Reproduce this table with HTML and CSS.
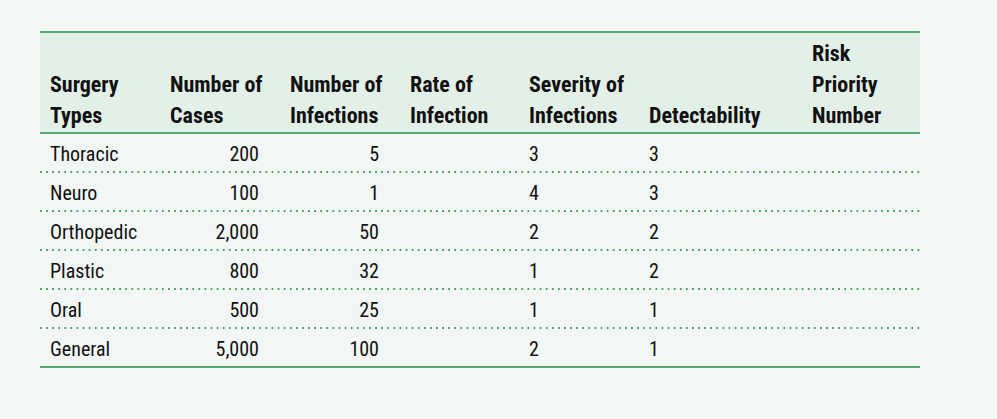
FILE: index.html
```html
<!DOCTYPE html>
<html lang="en">
<head>
<meta charset="utf-8">
<title>Surgical infection risk</title>
<link rel="stylesheet" href="styles.css">
</head>
<body>
<main class="page">
  <div class="table" role="table">
    <div class="row head" role="row">
      <div class="cell" role="columnheader">Surgery<br>Types</div>
      <div class="cell" role="columnheader">Number of<br>Cases</div>
      <div class="cell" role="columnheader">Number of<br>Infections</div>
      <div class="cell" role="columnheader">Rate of<br>Infection</div>
      <div class="cell" role="columnheader">Severity of<br>Infections</div>
      <div class="cell" role="columnheader">Detectability</div>
      <div class="cell" role="columnheader">Risk<br>Priority<br>Number</div>
    </div>
    <div class="row body" role="row">
      <div class="cell">Thoracic</div><div class="cell num">200</div><div class="cell num">5</div><div class="cell"></div><div class="cell">3</div><div class="cell">3</div><div class="cell"></div>
    </div>
    <div class="row body" role="row">
      <div class="cell">Neuro</div><div class="cell num">100</div><div class="cell num">1</div><div class="cell"></div><div class="cell">4</div><div class="cell">3</div><div class="cell"></div>
    </div>
    <div class="row body" role="row">
      <div class="cell">Orthopedic</div><div class="cell num">2,000</div><div class="cell num">50</div><div class="cell"></div><div class="cell">2</div><div class="cell">2</div><div class="cell"></div>
    </div>
    <div class="row body" role="row">
      <div class="cell">Plastic</div><div class="cell num">800</div><div class="cell num">32</div><div class="cell"></div><div class="cell">1</div><div class="cell">2</div><div class="cell"></div>
    </div>
    <div class="row body" role="row">
      <div class="cell">Oral</div><div class="cell num">500</div><div class="cell num">25</div><div class="cell"></div><div class="cell">1</div><div class="cell">1</div><div class="cell"></div>
    </div>
    <div class="row body last" role="row">
      <div class="cell">General</div><div class="cell num">5,000</div><div class="cell num">100</div><div class="cell"></div><div class="cell">2</div><div class="cell">1</div><div class="cell"></div>
    </div>
  </div>
</main>
</body>
</html>
```

FILE: styles.css
```css
html, body {
  margin: 0;
  padding: 0;
  background: #f2f7f5;
}

.page {
  padding: 31px 0 0 40px;
  font-family: "Roboto Condensed", "Open Sans", "DejaVu Sans Condensed", sans-serif;
  font-stretch: 75%;
  color: #111;
}

.table {
  width: 880px;
  border-top: 2px solid #55aa6d;
}

.row {
  display: grid;
  grid-template-columns: 120px 120px 120px 119px 120px 163px 118px;
}

.head {
  background: #e3f0e8;
  height: 99px;
  border-bottom: 2px solid #55aa6d;
  font-weight: bold;
  font-size: 22px;
  line-height: 31px;
}

.head .cell {
  align-self: end;
  padding: 0 0 1px 10px;
  white-space: nowrap;
}

.body {
  height: 39px;
  box-sizing: border-box;
  padding-top: 3px;
  font-size: 20px;
  line-height: 34px;
  background-image: linear-gradient(to right, #43a05e 2px, transparent 2px);
  background-size: 6.1px 2px;
  background-repeat: repeat-x;
  background-position: 0 100%;
}

.body .cell {
  padding-left: 10px;
}

.body .num {
  text-align: right;
  padding: 0 21px 0 0;
}

.body.last {
  background-image: none;
  border-bottom: 2px solid #55aa6d;
}
```
